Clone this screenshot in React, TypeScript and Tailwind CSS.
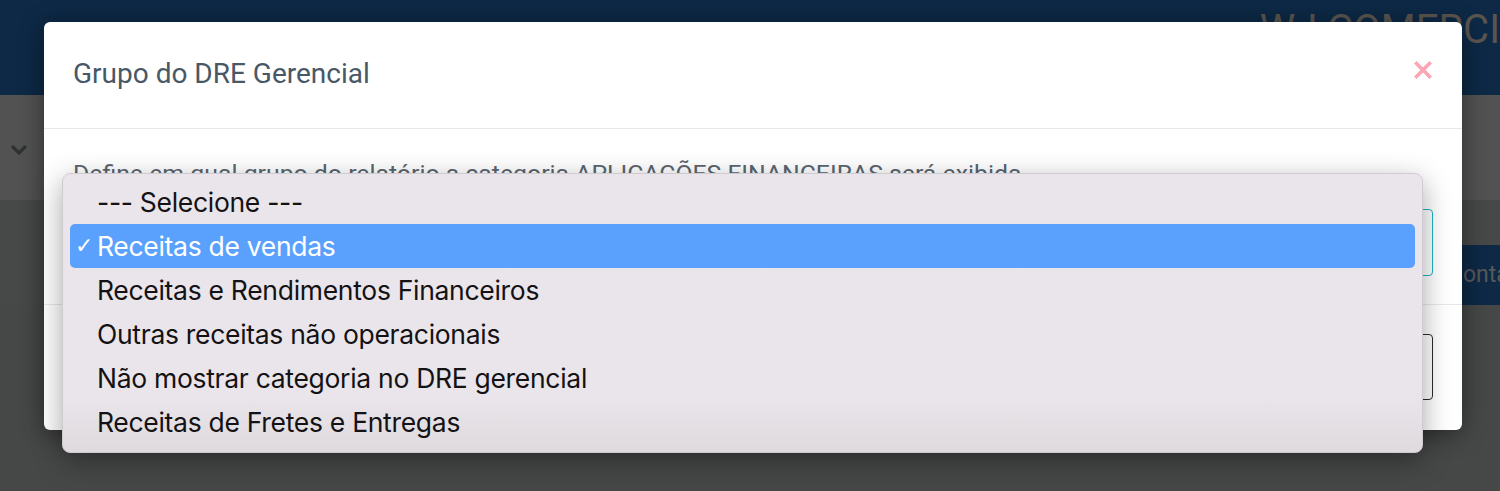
const options = [
  "--- Selecione ---",
  "Receitas de vendas",
  "Receitas e Rendimentos Financeiros",
  "Outras receitas não operacionais",
  "Não mostrar categoria no DRE gerencial",
  "Receitas de Fretes e Entregas",
];

export default function App() {
  const selected = 1;

  return (
    <div className="relative h-[491px] w-full overflow-hidden bg-[#464747] font-['Roboto',sans-serif]">
      {/* page behind the overlay */}
      <div className="flex h-[95px] items-start justify-end overflow-hidden bg-[#0d2946]">
        <span className="mt-[10px] -mr-[48px] whitespace-nowrap text-[40px] leading-[40px] text-[#5a554f]">
          WJ COMERCIAL
        </span>
      </div>
      <div className="flex h-[105px] items-center bg-[#525252] pl-[11px]">
        <svg width="16" height="10" viewBox="0 0 16 10" className="mt-[4px]">
          <path d="M2 2 L8 8 L14 2" stroke="#2f3234" strokeWidth="3.2" fill="none" strokeLinecap="round" strokeLinejoin="round" />
        </svg>
      </div>
      <div className="h-[45px] bg-[#474848]"></div>
      <div className="flex h-[60px] items-center justify-end bg-[#474848]">
        <div className="flex h-full w-[60px] items-center overflow-hidden bg-[#0d2946] pl-[8px] text-[23px] text-[#58585a]">
          <span>Conta</span>
        </div>
      </div>

      {/* modal */}
      <div className="absolute left-[44px] top-[22px] flex h-[408px] w-[1418px] flex-col rounded-md bg-white shadow-[0_4px_24px_rgba(0,0,0,0.45)]">
        <div className="flex h-[107px] shrink-0 items-center justify-between border-b border-[#e6e8ea] pl-[29px] pr-[30px]">
          <h2 className="mt-[-2px] text-[28px] leading-[34px] text-[#485866]">Grupo do DRE Gerencial</h2>
          <svg width="18" height="18" viewBox="0 0 18 18" className="mt-[-11px]">
            <path d="M2.5 2.5 L15.5 15.5 M15.5 2.5 L2.5 15.5" stroke="#fca5b3" strokeWidth="3.6" strokeLinecap="square" />
          </svg>
        </div>
        <div className="flex h-[176px] shrink-0 flex-col gap-[20px] border-b border-[#e6e8ea] px-[29px] pt-[30px]">
          <p className="whitespace-nowrap text-[24.8px] leading-[30px] text-[#5a6570]">
            Define em qual grupo do relatório a categoria APLICAÇÕES FINANCEIRAS será exibida
          </p>
          <div className="h-[67px] rounded border border-[#1fb3c8]"></div>
        </div>
        <div className="flex flex-1 items-start justify-end px-[29px] pt-[29px]">
          <div className="h-[66px] w-[160px] rounded border-[1.5px] border-[#2b2b2b]"></div>
        </div>
      </div>

      {/* native select popup */}
      <div className="absolute left-[62px] top-[173px] w-[1361px] rounded-lg border border-[#cfcbd0] bg-gradient-to-b from-[#e9e5ea] from-80% to-[#dedade] px-[7px] pb-[8px] pt-[6px] font-['Inter','Noto_Sans',sans-serif] shadow-[0_8px_28px_rgba(0,0,0,0.35)]">
        {options.map((opt, i) => (
          <div
            key={opt}
            className={`flex h-[44px] items-center rounded-[5px] text-[26.5px] leading-none tracking-[-0.3px] ${
              i === selected ? "bg-[#5aa1fe] text-white" : "text-[#141214]"
            }`}
          >
            <span className="w-[27px] pl-[5px] text-[22px] font-['DejaVu_Sans',sans-serif]">
              {i === selected ? "✓" : ""}
            </span>
            {opt}
          </div>
        ))}
      </div>
    </div>
  );
}
